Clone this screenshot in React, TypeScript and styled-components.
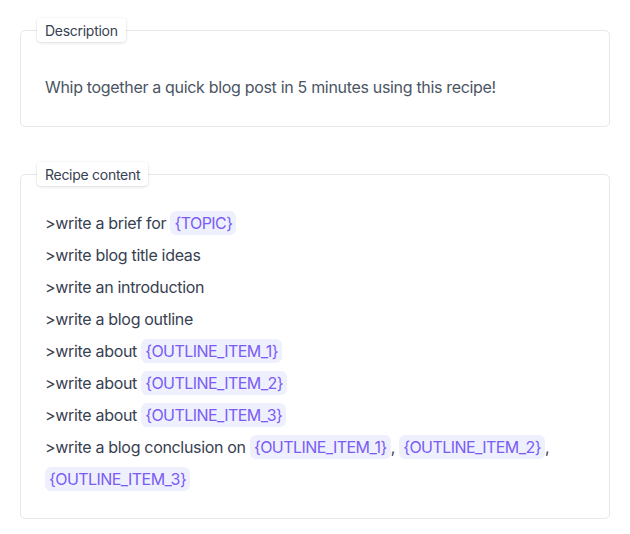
import React from "react";
import styled, { createGlobalStyle } from "styled-components";

const Global = createGlobalStyle`
  html, body { margin: 0; padding: 0; background: #ffffff; }
  body { font-family: Inter, "Noto Sans", sans-serif; -webkit-font-smoothing: antialiased; letter-spacing: -0.02em; }
`;

const Page = styled.div`
  padding: 30px 20px 14px 20px;
  display: flex;
  flex-direction: column;
  gap: 47px;
`;

const Card = styled.section`
  position: relative;
  border: 1px solid #e5e7eb;
  border-radius: 5px;
  background: #fff;
`;

const Label = styled.div`
  position: absolute;
  top: -13px;
  left: 16px;
  height: 24px;
  padding: 0 8px;
  display: flex;
  align-items: center;
  background: #fff;
  border-radius: 4px;
  box-shadow: 0 1px 3px rgba(0, 0, 0, 0.12), 0 0 0 1px rgba(0, 0, 0, 0.02);
  font-size: 14px;
  color: #374151;
  font-weight: 400;
  letter-spacing: -0.02em;
`;

const DescBody = styled.div`
  padding: 44px 24px 27px 24px;
  font-size: 16px;
  line-height: 24px;
  color: #4b5563;
`;

const RecipeBody = styled.div`
  padding: 32px 24px 23px 24px;
  font-size: 16px;
  line-height: 32px;
  color: #374151;
`;

const Line = styled.div`
  white-space: normal;
`;

const Chip = styled.span`
  display: inline-block;
  line-height: 24px;
  padding: 0 4px;
  border-radius: 6px;
  background: #eef0fe;
  color: #7a5cf5;
  letter-spacing: -0.035em;
`;

const lines: (string | { v: string })[][] = [
  [">write a brief for ", { v: "{TOPIC}" }],
  [">write blog title ideas"],
  [">write an introduction"],
  [">write a blog outline"],
  [">write about ", { v: "{OUTLINE_ITEM_1}" }],
  [">write about ", { v: "{OUTLINE_ITEM_2}" }],
  [">write about ", { v: "{OUTLINE_ITEM_3}" }],
  [
    ">write a blog conclusion on ",
    { v: "{OUTLINE_ITEM_1}" },
    ", ",
    { v: "{OUTLINE_ITEM_2}" },
    ", ",
    { v: "{OUTLINE_ITEM_3}" },
  ],
];

export default function App() {
  return (
    <>
      <Global />
      <Page>
        <Card>
          <Label>Description</Label>
          <DescBody>Whip together a quick blog post in 5 minutes using this recipe!</DescBody>
        </Card>
        <Card>
          <Label>Recipe content</Label>
          <RecipeBody>
            {lines.map((parts, i) => (
              <Line key={i}>
                {parts.map((p, j) =>
                  typeof p === "string" ? (
                    <React.Fragment key={j}>{p}</React.Fragment>
                  ) : (
                    <Chip key={j}>{p.v}</Chip>
                  )
                )}
              </Line>
            ))}
          </RecipeBody>
        </Card>
      </Page>
    </>
  );
}
